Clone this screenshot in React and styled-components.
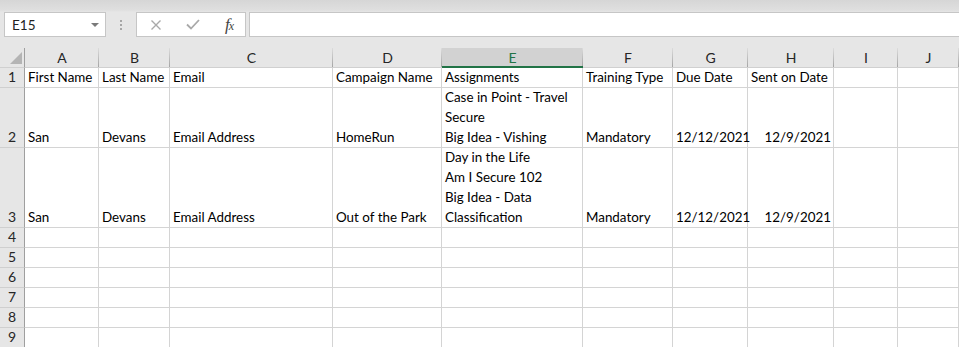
import React from 'react'
import styled, { createGlobalStyle } from 'styled-components'

const cols = [
  { l: 'A', w: 74 },
  { l: 'B', w: 71 },
  { l: 'C', w: 163 },
  { l: 'D', w: 109 },
  { l: 'E', w: 141, sel: true },
  { l: 'F', w: 90 },
  { l: 'G', w: 75 },
  { l: 'H', w: 86 },
  { l: 'I', w: 64 },
  { l: 'J', w: 0 },
]

const rows = [
  { n: 1, h: 20, cells: ['First Name', 'Last Name', 'Email', 'Campaign Name', 'Assignments', 'Training Type', 'Due Date', 'Sent on Date'] },
  {
    n: 2, h: 60,
    cells: ['San', 'Devans', 'Email Address', 'HomeRun', ['Case in Point - Travel', 'Secure', 'Big Idea - Vishing'], 'Mandatory', { r: '12/12/2021' }, { r: '12/9/2021' }],
  },
  {
    n: 3, h: 80,
    cells: ['San', 'Devans', 'Email Address', 'Out of the Park', ['Day in the Life', 'Am I Secure 102', 'Big Idea - Data', 'Classification'], 'Mandatory', { r: '12/12/2021' }, { r: '12/9/2021' }],
  },
  { n: 4, h: 20, cells: [] },
  { n: 5, h: 20, cells: [] },
  { n: 6, h: 20, cells: [] },
  { n: 7, h: 20, cells: [] },
  { n: 8, h: 20, cells: [] },
  { n: 9, h: 20, cells: [] },
]

export default function App() {
  return (
    <>
      <Global />
      <Toolbar>
        <NameBox>
          <span>E15</span>
          <Caret />
        </NameBox>
        <Grip>
          <Dot />
          <Dot />
          <Dot />
        </Grip>
        <FuncBox>
          <svg width="12" height="12" viewBox="0 0 12 12">
            <path d="M1.5 1.5 L10.5 10.5 M10.5 1.5 L1.5 10.5" stroke="#a9a9a9" strokeWidth="1.4" fill="none" />
          </svg>
          <svg width="14" height="11" viewBox="0 0 14 11">
            <path d="M1 5.5 L5 9.5 L13 1" stroke="#a9a9a9" strokeWidth="1.8" fill="none" />
          </svg>
          <Fx>f<small>x</small></Fx>
        </FuncBox>
        <Formula />
      </Toolbar>
      <Sheet>
        <Corner>
          <svg width="12" height="12" viewBox="0 0 12 12">
            <path d="M12 0 L12 12 L0 12 Z" fill="#b4b4b4" />
          </svg>
        </Corner>
        {cols.map(c => (
          <ColHead key={c.l} $sel={c.sel}>{c.l}</ColHead>
        ))}
        {rows.map(r => (
          <React.Fragment key={r.n}>
            <RowHead>{r.n}</RowHead>
            {cols.map((c, i) => {
              const v = r.cells[i]
              const right = v && v.r
              const lines = Array.isArray(v) ? v : v ? [right || v] : []
              return (
                <Cell key={c.l} $right={!!right}>
                  {lines.map((t, k) => <Line key={k}>{t}</Line>)}
                </Cell>
              )
            })}
          </React.Fragment>
        ))}
      </Sheet>
    </>
  )
}

const Global = createGlobalStyle`
html, body {
  margin: 0;
  background: #fff;
  overflow: hidden;
  font-family: Lato, "Open Sans", sans-serif;
}
`;

const Toolbar = styled.div`
height: 48px;
box-sizing: border-box;
display: flex;
align-items: flex-start;
padding: 12px 0 0 4px;
background: linear-gradient(to bottom, #d6d6d6 0px, #dfdfdf 10px, #e6e6e6 12px, #e6e6e6 100%);
`;

const NameBox = styled.div`
width: 102px;
height: 25px;
box-sizing: border-box;
border: 1px solid #c6c6c6;
background: #fff;
display: flex;
align-items: center;
justify-content: space-between;
padding: 0 6px 0 7px;
font-size: 13.5px;
color: #222;
`;

const Caret = styled.div`
width: 0;
height: 0;
border-left: 4px solid transparent;
border-right: 4px solid transparent;
border-top: 4px solid #7a7a7a;
`;

const Grip = styled.div`
display: flex;
flex-direction: column;
gap: 2px;
margin: 8px 0 0 14px;
`;

const Dot = styled.div`
width: 2px;
height: 2px;
background: #a6a6a6;
`;

const FuncBox = styled.div`
width: 110px;
height: 25px;
box-sizing: border-box;
margin-left: 14px;
border: 1px solid #c6c6c6;
background: #fff;
display: flex;
align-items: center;
justify-content: space-between;
padding: 0 12px 0 13px;
`;

const Fx = styled.span`
font-family: "Liberation Serif", serif;
font-style: italic;
font-size: 17px;
color: #444;
letter-spacing: -1px;
line-height: 1;
small {
  font-size: 12px;
}
`;

const Formula = styled.div`
flex: 1;
height: 25px;
box-sizing: border-box;
margin-left: 3px;
border: 1px solid #c6c6c6;
border-right: none;
background: #fff;
`;

const Sheet = styled.div`
display: grid;
grid-template-columns: 25px ${cols.map(c => (c.w ? c.w + 'px' : '1fr')).join(' ')};
grid-template-rows: 20px ${rows.map(r => r.h + 'px').join(' ')};
font-size: 13.4px;
`;

const Corner = styled.div`
background: #e6e6e6;
border-right: 1px solid #9f9f9f;
border-bottom: 1px solid #d0d0d0;
display: flex;
align-items: flex-end;
justify-content: flex-end;
padding: 0 2px 3px 0;
`;

const ColHead = styled.div`
position: relative;
background: ${p => (p.$sel ? '#d2d2d2' : '#e6e6e6')};
color: ${p => (p.$sel ? '#217346' : '#262626')};
border-bottom: ${p => (p.$sel ? '2px solid #217346' : '1px solid #d0d0d0')};
text-align: center;
line-height: 19px;
font-size: 14px;
&::after {
  content: '';
  position: absolute;
  right: 0;
  top: 0;
  bottom: 0;
  width: 1px;
  background: linear-gradient(to bottom, #dcdcdc, #a4a4a4);
}
`;

const RowHead = styled.div`
background: #e6e6e6;
color: #262626;
border-right: 1px solid #9f9f9f;
border-bottom: 1px solid #cfcfcf;
display: flex;
flex-direction: column;
justify-content: flex-end;
align-items: center;
line-height: 20px;
font-size: 14px;
`;

const Cell = styled.div`
border-right: 1px solid #d4d4d4;
border-bottom: 1px solid #d4d4d4;
display: flex;
flex-direction: column;
justify-content: flex-end;
padding: 0 2px 0 3px;
text-align: ${p => (p.$right ? 'right' : 'left')};
color: #000;
white-space: nowrap;
min-width: 0;
`;

const Line = styled.div`
line-height: 20px;
`;
